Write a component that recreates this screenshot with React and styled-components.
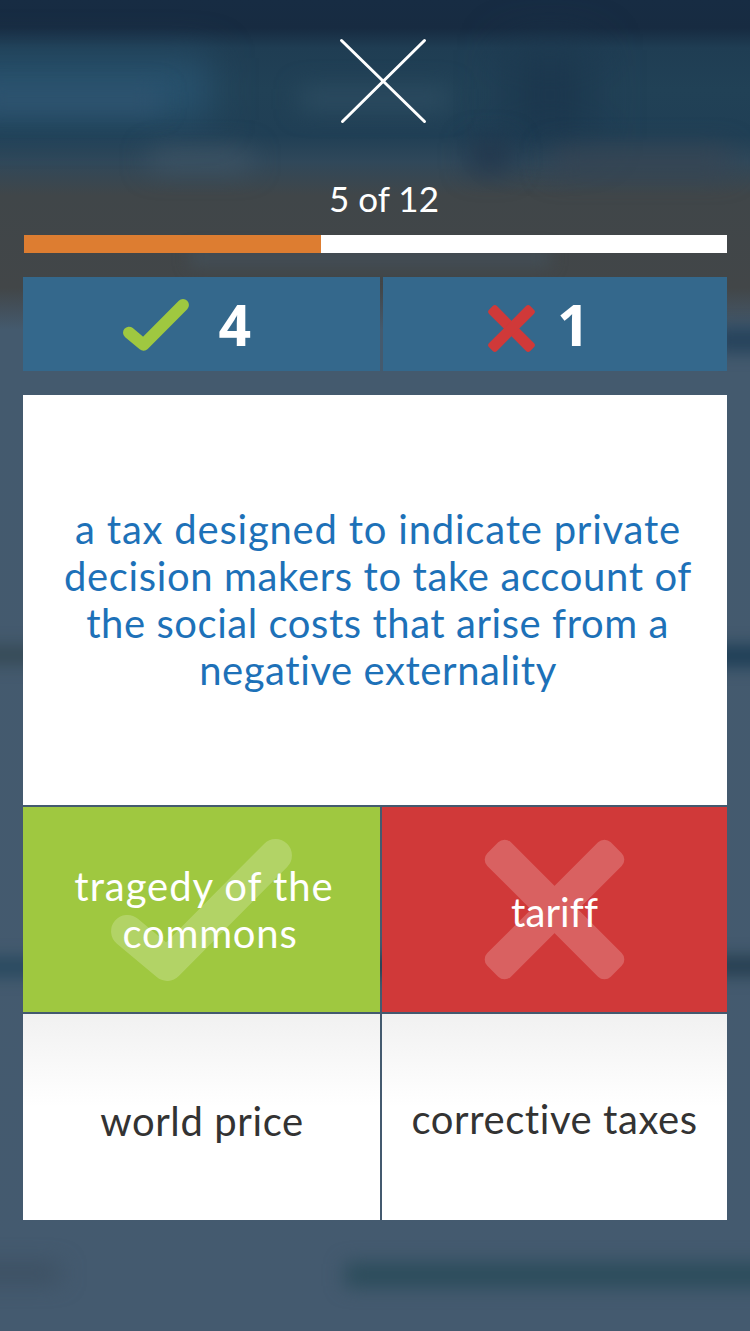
import React from "react";
import styled, { createGlobalStyle } from "styled-components";

const GlobalStyle = createGlobalStyle`
  * { box-sizing: border-box; }
  body { margin: 0; background: #445a6f; }
`;

const Screen = styled.main`
  position: relative;
  width: 750px;
  height: 1331px;
  padding: 38px 23px 0;
  overflow: hidden;
  display: flex;
  flex-direction: column;
  font-family: Lato, "Liberation Sans", sans-serif;
  color: #fff;
  background: linear-gradient(
    #172c43 0, #172b41 28px, #1f3d53 48px, #214156 90px, #203f55 135px,
    #30485a 162px, #404649 195px, #424648 288px, #445a6e 330px, #445a6f 100%
  );
  isolation: isolate;
`;

const Glow = styled.div`
  position: absolute;
  z-index: -1;
  left: ${(p) => p.$x}px;
  top: ${(p) => p.$y}px;
  width: ${(p) => p.$w}px;
  height: ${(p) => p.$h}px;
  background: ${(p) => p.$color};
  filter: blur(${(p) => p.$blur || 12}px);
`;

const CloseButton = styled.button`
  align-self: center;
  width: 88px;
  height: 88px;
  margin-left: 16px;
  padding: 0;
  border: 0;
  background: none;
  svg { display: block; }
`;

const Counter = styled.div`
  height: 40px;
  margin-top: 52px;
  padding-left: 18px;
  text-align: center;
  font-size: 35px;
  line-height: 40px;
`;

const Progress = styled.div`
  height: 18px;
  margin: 17px 0 24px 1px;
  background: #fff;
`;

const ProgressFill = styled.div`
  width: 297px;
  height: 100%;
  background: #dd7d31;
`;

const Scores = styled.section`
  display: grid;
  grid-template-columns: 357px 344px;
  gap: 3px;
  height: 94px;
`;

const Score = styled.div`
  display: flex;
  align-items: center;
  gap: ${(p) => p.$gap}px;
  padding-left: ${(p) => p.$inset}px;
  background: #34688c;
  font: 700 57px "Open Sans", sans-serif;
  svg { flex: none; position: relative; top: ${(p) => p.$drop || 0}px; }
`;

const Question = styled.section`
  display: flex;
  flex-direction: column;
  justify-content: center;
  height: 410px;
  margin: 24px 0 2px;
  background: #fff;
  color: #1d71b8;
`;

const Answers = styled.section`
  display: grid;
  grid-template: 205px 206px / 357px 345px;
  gap: 2px;
`;

const fills = {
  correct: "#9fc840",
  wrong: "#d03939",
  idle: "linear-gradient(#f1f1f1, #fff 45%)",
};

const Answer = styled.button`
  position: relative;
  display: flex;
  flex-direction: column;
  justify-content: center;
  padding: ${(p) => p.$nudge || 0}px 0 0;
  border: 0;
  font-family: inherit;
  color: ${(p) => (p.$state === "idle" ? "#333" : "#fff")};
  background: ${(p) => fills[p.$state]};
`;

const Watermark = styled.span`
  position: absolute;
  inset: 0;
  display: grid;
  place-items: center;
  opacity: 0.2;
`;

const Line = styled.span`
  position: relative;
  display: block;
  width: 100%;
  padding-left: ${(p) => p.$pad || 0}px;
  text-align: center;
  white-space: nowrap;
  font-size: 40px;
  line-height: 47px;
  letter-spacing: ${(p) => p.$track}px;
`;

const CheckIcon = ({ width, color }) => (
  <svg width={width} height={(width * 142) / 181} viewBox="0 0 181 142" fill="none">
    <path
      d="M16.4 92.3 56.2 125.6 164.6 16.4"
      stroke={color}
      strokeWidth="32.6"
      strokeLinecap="round"
      strokeLinejoin="round"
    />
  </svg>
);

const CrossIcon = ({ size, color }) => (
  <svg width={size} height={size} viewBox="-70.5 -70.5 141 141" fill={color}>
    <rect x="-87.3" y="-16.7" width="174.6" height="33.4" rx="9" transform="rotate(45)" />
    <rect x="-87.3" y="-16.7" width="174.6" height="33.4" rx="9" transform="rotate(-45)" />
  </svg>
);

export default function App() {
  return (
    <>
      <GlobalStyle />
      <Screen>
        <Glow $x={-60} $y={58} $w={270} $h={62} $color="#28526e" $blur={20} />
        <Glow $x={-20} $y={90} $w={180} $h={20} $color="#305470" $blur={12} />
        <Glow $x={300} $y={88} $w={150} $h={22} $color="#2d4c61" $blur={12} />
        <Glow $x={510} $y={50} $w={80} $h={90} $color="#1b364d" $blur={24} />
        <Glow $x={150} $y={152} $w={100} $h={16} $color="#43596a" $blur={14} />
        <Glow $x={470} $y={142} $w={40} $h={28} $color="#20344a" $blur={14} />
        <Glow $x={550} $y={150} $w={180} $h={22} $color="#374452" $blur={14} />
        <Glow $x={190} $y={250} $w={360} $h={16} $color="#434f58" $blur={8} />
        <Glow $x={715} $y={327} $w={70} $h={26} $color="#26435c" $blur={8} />
        <Glow $x={-60} $y={645} $w={120} $h={20} $color="#374b57" $blur={8} />
        <Glow $x={690} $y={645} $w={120} $h={22} $color="#1f3f57" $blur={8} />
        <Glow $x={-60} $y={957} $w={120} $h={20} $color="#294a60" $blur={8} />
        <Glow $x={360} $y={956} $w={450} $h={20} $color="#263f51" $blur={8} />
        <Glow $x={-60} $y={1266} $w={120} $h={14} $color="#394b5c" $blur={12} />
        <Glow $x={345} $y={1264} $w={460} $h={22} $color="#284a58" $blur={10} />

        <CloseButton aria-label="Close">
          <svg width="88" height="88" fill="none" stroke="#fff" strokeWidth="3" strokeLinecap="round">
            <path d="M2.5 2.5 85.5 83.5M85.5 2.5 3.5 83.5" />
          </svg>
        </CloseButton>
        <Counter>5 of 12</Counter>
        <Progress>
          <ProgressFill />
        </Progress>

        <Scores>
          <Score $inset={100} $gap={29.5} $drop={0.7}>
            <CheckIcon width={66} color="#9fc840" />
            <span>4</span>
          </Score>
          <Score $inset={104.5} $gap={22.5} $drop={4.2}>
            <CrossIcon size={47} color="#d03939" />
            <span>1</span>
          </Score>
        </Scores>

        <Question>
          <Line $track={0.79} $pad={6}>a tax designed to indicate private</Line>
          <Line $track={0.63} $pad={6}>decision makers to take account of</Line>
          <Line $track={0.55} $pad={5}>the social costs that arise from a</Line>
          <Line $track={0.58} $pad={6}>negative externality</Line>
        </Question>

        <Answers>
          <Answer $state="correct" $nudge={1}>
            <Watermark><CheckIcon width={181} color="#fff" /></Watermark>
            <Line $track={0.96} $pad={5}>tragedy of the</Line>
            <Line $track={0.8} $pad={17}>commons</Line>
          </Answer>
          <Answer $state="wrong" $nudge={6}>
            <Watermark><CrossIcon size={141} color="#fff" /></Watermark>
            <Line $track={0.1}>tariff</Line>
          </Answer>
          <Answer $state="idle" $nudge={8}>
            <Line $track={0.62} $pad={1}>world price</Line>
          </Answer>
          <Answer $state="idle" $nudge={5}>
            <Line $track={0.57}>corrective taxes</Line>
          </Answer>
        </Answers>
      </Screen>
    </>
  );
}
